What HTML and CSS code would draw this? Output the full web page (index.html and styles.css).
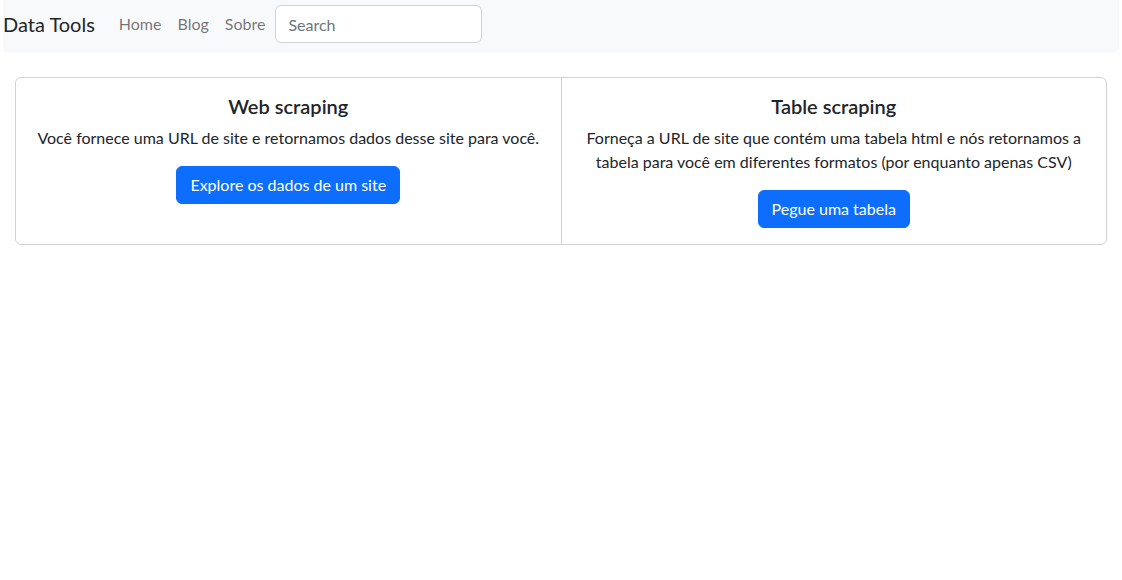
FILE: index.html
```html
<!DOCTYPE html>
<html lang="pt">
<head>
<meta charset="utf-8">
<title>Data Tools</title>
<link rel="stylesheet" href="styles.css">
</head>
<body>
<nav class="navbar">
  <a class="brand" href="#">Data Tools</a>
  <ul class="nav">
    <li><a class="nav-link" href="#">Home</a></li>
    <li><a class="nav-link" href="#">Blog</a></li>
    <li><a class="nav-link" href="#">Sobre</a></li>
  </ul>
  <form class="search-form">
    <input class="search" type="search" placeholder="Search" aria-label="Search">
  </form>
</nav>
<main class="container">
  <div class="card-group">
    <div class="card">
      <div class="card-body">
        <h5 class="card-title">Web scraping</h5>
        <p class="card-text">Você fornece uma URL de site e retornamos dados desse site para você.</p>
        <a class="btn" href="#">Explore os dados de um site</a>
      </div>
    </div>
    <div class="card">
      <div class="card-body">
        <h5 class="card-title">Table scraping</h5>
        <p class="card-text">Forneça a URL de site que contém uma tabela html e nós retornamos a tabela para você em diferentes formatos (por enquanto apenas CSV)</p>
        <a class="btn" href="#">Pegue uma tabela</a>
      </div>
    </div>
  </div>
</main>
</body>
</html>
```
FILE: styles.css
```css
* { box-sizing: border-box; }
html, body { margin: 0; padding: 0; }
body {
  font-family: Lato, "Liberation Sans", sans-serif;
  font-size: 16px;
  line-height: 1.5;
  color: #212529;
  background: #fff;
  padding: 0 3px;
}
a { text-decoration: none; }

.navbar {
  display: flex;
  align-items: center;
  background: #f8f9fa;
  border-radius: 0 0 6px 6px;
  padding: 4px 0 9px;
  height: 53px;
}
.brand {
  color: #212529;
  font-size: 20px;
  line-height: 30px;
  padding: 5px 0;
  margin: 0 16px 0 0;
  white-space: nowrap;
}
.nav {
  display: flex;
  list-style: none;
  margin: 0;
  padding: 0;
}
.nav-link {
  display: block;
  padding: 8px;
  color: rgba(0, 0, 0, 0.55);
  line-height: 24px;
}
.search-form { display: flex; margin: 0 0 0 2px; }
.search {
  width: 207px;
  height: 38px;
  padding: 6px 12px;
  font: inherit;
  font-size: 16px;
  color: #212529;
  background: #fff;
  border: 1px solid #ced4da;
  border-radius: 6px;
  outline: none;
  -webkit-appearance: none;
  appearance: none;
}
.search::placeholder { color: #6c757d; }

.container {
  padding: 0 12px;
  margin-top: 24px;
}
.card-group {
  display: flex;
  border: 1px solid rgba(0, 0, 0, 0.175);
  border-radius: 6px;
}
.card {
  flex: 1 1 0;
  min-width: 0;
  text-align: center;
}
.card + .card { border-left: 1px solid rgba(0, 0, 0, 0.175); }
.card-body { padding: 16px; }
.card-title {
  margin: 0 0 8px;
  font-size: 20px;
  font-weight: 600;
  line-height: 1.2;
}
.card-text { margin: 0 0 16px; }
.btn {
  display: inline-block;
  padding: 6px 13px;
  font-size: 16px;
  line-height: 24px;
  color: #fff;
  background: #0d6efd;
  border: 1px solid #0d6efd;
  border-radius: 6px;
}
```
